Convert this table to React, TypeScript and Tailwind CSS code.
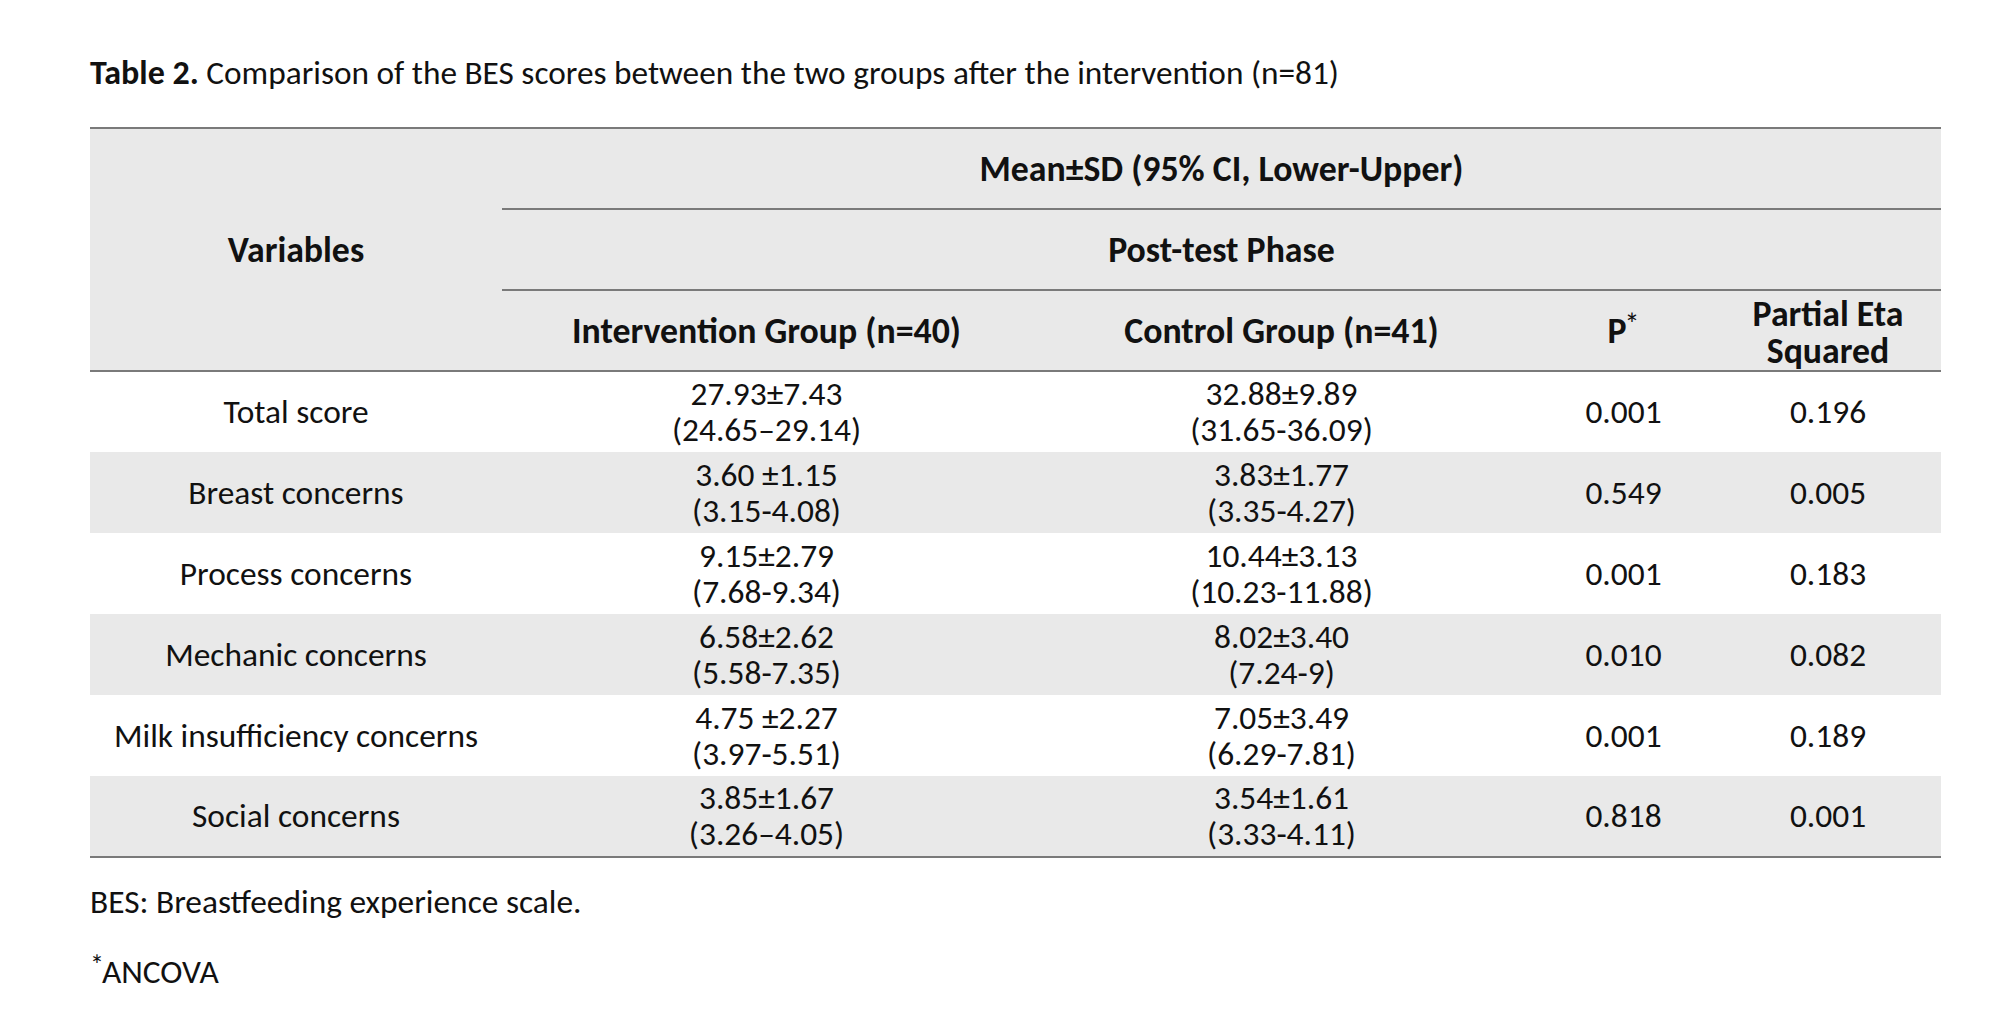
import React from "react";

const rows = [
  { v: "Total score", a: ["27.93±7.43", "(24.65–29.14)"], b: ["32.88±9.89", "(31.65-36.09)"], p: "0.001", e: "0.196" },
  { v: "Breast concerns", a: ["3.60 ±1.15", "(3.15-4.08)"], b: ["3.83±1.77", "(3.35-4.27)"], p: "0.549", e: "0.005" },
  { v: "Process concerns", a: ["9.15±2.79", "(7.68-9.34)"], b: ["10.44±3.13", "(10.23-11.88)"], p: "0.001", e: "0.183" },
  { v: "Mechanic concerns", a: ["6.58±2.62", "(5.58-7.35)"], b: ["8.02±3.40", "(7.24-9)"], p: "0.010", e: "0.082" },
  { v: "Milk insufficiency concerns", a: ["4.75 ±2.27", "(3.97-5.51)"], b: ["7.05±3.49", "(6.29-7.81)"], p: "0.001", e: "0.189" },
  { v: "Social concerns", a: ["3.85±1.67", "(3.26–4.05)"], b: ["3.54±1.61", "(3.33-4.11)"], p: "0.818", e: "0.001" },
];

function Two({ lines }: { lines: string[] }) {
  return (
    <div className="flex flex-col items-center">
      <span className="leading-[36px]">{lines[0]}</span>
      <span className="leading-[36px]">{lines[1]}</span>
    </div>
  );
}

export default function App() {
  return (
    <div
      className="min-h-[1023px] w-[2000px] bg-white pl-[90px] pt-[55px] text-[#111111]"
      style={{ fontFamily: "Carlito, Calibri, Lato, 'Liberation Sans', sans-serif" }}
    >
      <p className="text-[33.3px] leading-[36px]">
        <span className="text-[34px] font-bold">Table 2.</span> Comparison of the BES scores between the two groups after the intervention (n=81)
      </p>
      <table className="mt-[36px] w-[1851px] table-fixed border-collapse text-[33.4px] leading-[36px]">
        <colgroup>
          <col className="w-[412px]" />
          <col className="w-[529px]" />
          <col className="w-[501px]" />
          <col className="w-[183px]" />
          <col className="w-[226px]" />
        </colgroup>
        <thead className="bg-[#e9e9e9] text-[35.8px] font-bold">
          <tr className="h-[81px] border-t-2 border-[#7a7a7a]">
            <th rowSpan={3} className="p-0 text-center align-middle font-bold">
              Variables
            </th>
            <th colSpan={4} className="border-b-2 border-[#7a7a7a] p-0 text-center align-middle font-bold">
              Mean±SD (95% CI, Lower-Upper)
            </th>
          </tr>
          <tr className="h-[81px]">
            <th colSpan={4} className="border-b-2 border-[#7a7a7a] p-0 text-center align-middle font-bold">
              Post-test Phase
            </th>
          </tr>
          <tr className="h-[81px] border-b-2 border-[#7a7a7a]">
            <th className="p-0 text-center align-middle font-bold">Intervention Group (n=40)</th>
            <th className="p-0 text-center align-middle font-bold">Control Group (n=41)</th>
            <th className="p-0 text-center align-middle font-bold">
              P<span className="relative top-[-8px] ml-[-2px] inline-block text-[30px] font-normal leading-none">*</span>
            </th>
            <th className="p-0 text-center align-middle font-bold">
              <div className="flex flex-col items-center pt-[4px]">
                <span className="leading-[37px]">Partial Eta</span>
                <span className="leading-[37px]">Squared</span>
              </div>
            </th>
          </tr>
        </thead>
        <tbody>
          {rows.map((r, i) => (
            <tr
              key={r.v}
              className={
                (i % 2 === 1 ? "bg-[#e9e9e9] " : "bg-white ") +
                "h-[81px]" +
                (i === rows.length - 1 ? " border-b-2 border-[#7a7a7a]" : "")
              }
            >
              <td className="p-0 text-center align-middle">{r.v}</td>
              <td className="p-0 text-center align-middle">
                <Two lines={r.a} />
              </td>
              <td className="p-0 text-center align-middle">
                <Two lines={r.b} />
              </td>
              <td className="p-0 text-center align-middle">{r.p}</td>
              <td className="p-0 text-center align-middle">{r.e}</td>
            </tr>
          ))}
        </tbody>
      </table>
      <p className="mt-[26px] text-[33.4px] leading-[36px]">BES: Breastfeeding experience scale.</p>
      <p className="mt-[34px] text-[33.4px] leading-[36px]">
        <span className="relative top-[-8px] mr-[-2px] inline-block text-[28px] leading-none">*</span>ANCOVA
      </p>
    </div>
  );
}
